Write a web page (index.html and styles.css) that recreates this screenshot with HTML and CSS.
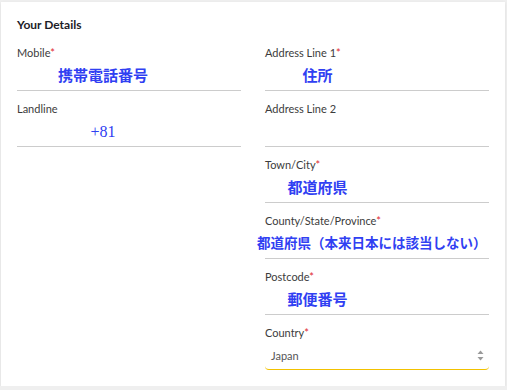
FILE: index.html
```html
<!DOCTYPE html>
<html lang="ja">
<head>
  <meta charset="UTF-8" />
  <title>Your Details</title>
  <link rel="stylesheet" href="styles.css">
</head>
<body>

  <div class="card">
    <h3 class="card-title">Your Details</h3>

    <div class="details">
      <!-- left column -->
      <div class="col col-left">
        <div class="field">
          <label>Mobile<span class="req">*</span></label>
          <div class="input"><span class="value">携帯電話番号</span></div>
        </div>
        <div class="field">
          <label>Landline</label>
          <div class="input"><span class="value latin">+81</span></div>
        </div>
      </div>

      <!-- right column -->
      <div class="col col-right">
        <div class="field">
          <label>Address Line 1<span class="req">*</span></label>
          <div class="input"><span class="value">住所</span></div>
        </div>
        <div class="field">
          <label>Address Line 2</label>
          <div class="input"></div>
        </div>
        <div class="field">
          <label>Town/City<span class="req">*</span></label>
          <div class="input"><span class="value">都道府県</span></div>
        </div>
        <div class="field">
          <label>County/State/Province<span class="req">*</span></label>
          <div class="input"><span class="value wide">都道府県（本来日本には該当しない）</span></div>
        </div>
        <div class="field">
          <label>Postcode<span class="req">*</span></label>
          <div class="input"><span class="value">郵便番号</span></div>
        </div>
        <div class="field">
          <label>Country<span class="req">*</span></label>
          <div class="select">
            <span>Japan</span>
            <svg class="arrows" width="7" height="11" viewBox="0 0 7 11">
              <path d="M3.5 0.5 L6.5 4 L0.5 4 Z" fill="#9a9a9a"/>
              <path d="M3.5 10.5 L6.5 7 L0.5 7 Z" fill="#9a9a9a"/>
            </svg>
          </div>
        </div>
      </div>
    </div>
  </div>

</body>
</html>
```

FILE: styles.css
```css
body {
  margin: 0;
  background-color: #efefef;
  font-family: Lato, "Noto Sans", sans-serif;
}

.card {
  margin: 2px 2px 0 1px;
  height: 384px;
  box-sizing: border-box;
  background-color: white;
  padding: 15px 16px 0 16px;
  box-shadow: 0 1px 3px rgba(0, 0, 0, 0.08);
}

.card-title {
  margin: 0 0 12px 0;
  font-size: 12px;
  line-height: 16px;
  font-weight: bold;
  color: #1c1c28;
}

.details {
  display: grid;
  grid-template-columns: 224px 224px;
  column-gap: 24px;
  align-items: start;
}

.field {
  margin-bottom: 10px;
}

.field label {
  display: block;
  font-size: 11px;
  line-height: 16px;
  color: #3c3c3c;
}

.req {
  color: #e0282e;
}

.input {
  height: 29px;
  border-bottom: 1px solid #cccccc;
  display: flex;
  align-items: center;
}

.value {
  display: block;
  text-align: center;
  white-space: nowrap;
  font-family: "Liberation Serif", "Noto Sans CJK JP", serif;
  font-size: 15px;
  font-weight: bold;
  line-height: 18px;
  color: #3040f2;
}

.value.latin {
  font-weight: normal;
  font-size: 16px;
}

.col-left .value {
  width: 172px;
}

.col-right .value {
  width: 105px;
}

.col-right .value.wide {
  width: auto;
  margin-left: -8px;
  font-size: 13.5px;
}

.select {
  height: 27px;
  margin-top: 1px;
  padding: 0 6px;
  display: flex;
  align-items: center;
  justify-content: space-between;
  border-bottom: 1px solid #f2c200;
  border-radius: 0 0 4px 4px;
  font-size: 11px;
  color: #555555;
}

.arrows {
  display: block;
  margin-right: -1px;
}
```
